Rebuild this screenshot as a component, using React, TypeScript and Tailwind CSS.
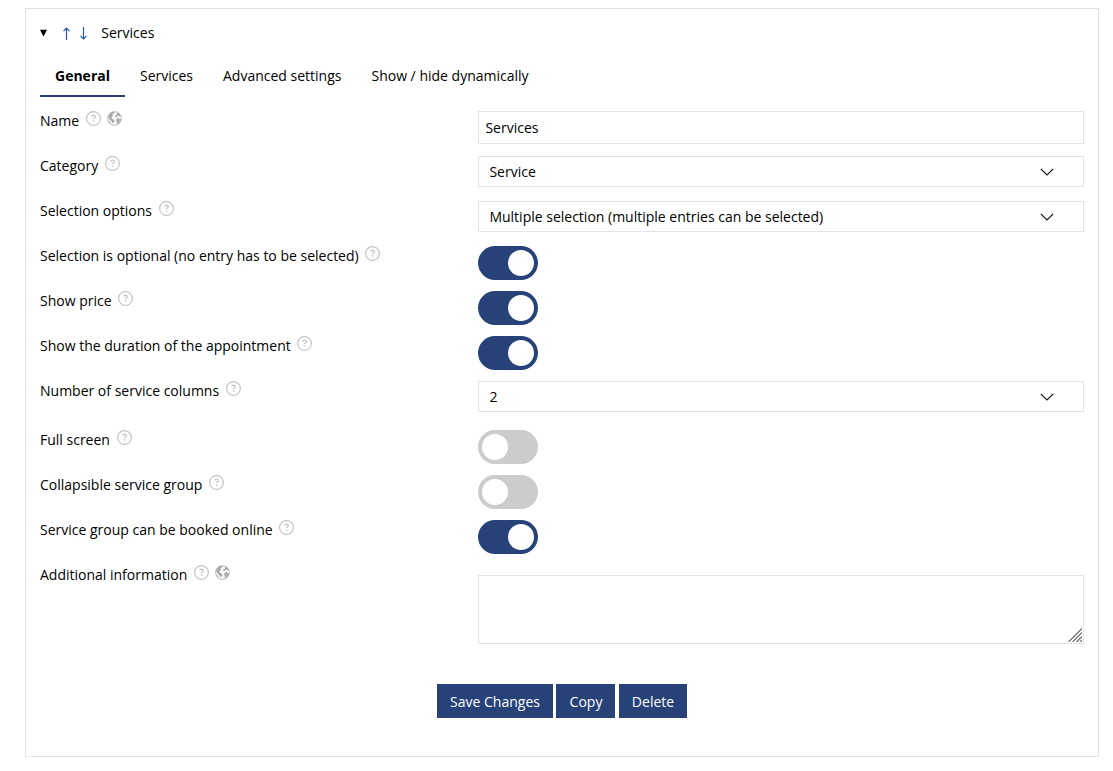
import { useState } from 'react';
import type { ReactNode } from 'react';

const tabs = ['General', 'Services', 'Advanced settings', 'Show / hide dynamically'];

function HelpIcon() {
  return (
    <svg className="ml-[6.7px] h-[15px] w-[15px] shrink-0" viewBox="0 0 15 15" fill="none" stroke="#c4c4c4">
      <circle cx="7.5" cy="7.5" r="6.9" strokeWidth="1.2" />
      <path d="M5.7 5.6C5.8 4.7 6.5 4.2 7.5 4.2c1.1 0 1.8.6 1.8 1.4 0 1.2-1.7 1.2-1.7 2.5" strokeWidth="1.3" />
      <path d="M7.6 9.2v1.4" strokeWidth="1.4" />
    </svg>
  );
}

function GlobeIcon() {
  return (
    <svg className="ml-[6.4px] h-[15px] w-[15px] shrink-0" viewBox="0 0 15 15">
      <circle cx="7.5" cy="7.5" r="6.9" fill="#f8f8f8" stroke="#bdbdbd" strokeWidth="1" />
      <path d="M1.6 4 4 1.4 7.6.6 7 2.2 5.2 3.4 6.4 4.8 4.8 5.6 4.4 7.2 6.4 8.6 7.6 9.8 6.8 11.4 5.6 12 4.6 10.2 3 9 1.4 6.6z" fill="#a8a8a8" />
      <path d="M10.4 1.4 12.6 2.8 13.8 5 12.4 5.2 11.6 4.4 10.2 5.6 8.6 6.2 7.8 5 9.6 4z" fill="#a8a8a8" />
      <path d="M9.6 7.4 11.4 6.8 12.6 8 14.2 8 13.4 10.8 11.4 12.8 9.4 13.6 10 11.6 9 9.8z" fill="#b0b0b0" />
      <path d="M1.2 9.6 2.6 10.2 3.8 12.8 2.2 11.6z" fill="#b0b0b0" />
    </svg>
  );
}

function Row({ label, globe, tall, children }: { label: string; globe?: boolean; tall?: boolean; children: ReactNode }) {
  return (
    <div className={`flex items-start ${tall ? 'h-[49px]' : 'h-[45px]'}`}>
      <div className="flex w-[438px] shrink-0 items-start">
        <span className="leading-[19px]">{label}</span>
        <HelpIcon />
        {globe && <GlobeIcon />}
      </div>
      {children}
    </div>
  );
}

function Select({ value }: { value: string }) {
  return (
    <button className="flex h-[31px] flex-1 items-center justify-between border border-[#e3e3e3] bg-white pr-[29px] pl-[10.4px] text-left">
      <span>{value}</span>
      <svg className="h-[8px] w-[14px]" viewBox="0 0 14 8" fill="none" stroke="#111" strokeWidth="1.05">
        <path d="M.9 1 7 6.9 13.1 1" />
      </svg>
    </button>
  );
}

function Toggle({ initial = false }: { initial?: boolean }) {
  const [on, setOn] = useState(initial);

  return (
    <button
      role="switch"
      aria-checked={on}
      onClick={() => setOn(!on)}
      className={`flex h-[34px] w-[60px] items-center rounded-full px-1 ${on ? 'justify-end bg-[#264278]' : 'justify-start bg-[#cccccc]'}`}
    >
      <span className="h-[26px] w-[26px] rounded-full bg-white" />
    </button>
  );
}

export default function App() {
  const [activeTab, setActiveTab] = useState('General');
  const [name, setName] = useState('Services');

  return (
    <div className="h-[771px] bg-white pt-2 pr-[14px] pl-[25px] font-['Open_Sans',sans-serif] text-sm text-black">
      <div className="h-[749px] border border-[#e1e1e1] px-[14px]">
        {/* Header */}
        <div className="flex h-[48px] items-center">
          <svg className="h-[8px] w-[7px]" viewBox="0 0 7 8">
            <path d="M0 .8h7L3.5 7.6z" fill="#000" />
          </svg>
          <svg className="ml-[15px] h-[13px] w-[9px]" viewBox="0 0 9 13" fill="none" stroke="#2456b0" strokeWidth="1.2">
            <path d="M4.5 13V1.2M1.5 4.2l3-3 3 3" />
          </svg>
          <svg className="ml-[8px] h-[13px] w-[9px]" viewBox="0 0 9 13" fill="none" stroke="#2456b0" strokeWidth="1.2">
            <path d="M4.5 0v11.8M1.5 8.8l3 3 3-3" />
          </svg>
          <span className="ml-[13.3px]">Services</span>
        </div>

        {/* Tabs */}
        <div className="flex h-[40px]">
          {tabs.map((tab) => (
            <button
              key={tab}
              onClick={() => setActiveTab(tab)}
              className={`border-b-2 px-[15px] ${activeTab === tab ? 'border-[#264278] font-bold' : 'border-transparent'}`}
            >
              {tab}
            </button>
          ))}
        </div>

        {/* Settings */}
        <div className="mt-[14px]">
          <Row label="Name" globe>
            <input
              value={name}
              onChange={(e) => setName(e.target.value)}
              className="h-[33px] flex-1 border border-[#e3e3e3] px-[6.4px] outline-none"
            />
          </Row>
          <Row label="Category">
            <Select value="Service" />
          </Row>
          <Row label="Selection options">
            <Select value="Multiple selection (multiple entries can be selected)" />
          </Row>
          <Row label="Selection is optional (no entry has to be selected)">
            <Toggle initial />
          </Row>
          <Row label="Show price">
            <Toggle initial />
          </Row>
          <Row label="Show the duration of the appointment">
            <Toggle initial />
          </Row>
          <Row label="Number of service columns" tall>
            <Select value="2" />
          </Row>
          <Row label="Full screen">
            <Toggle />
          </Row>
          <Row label="Collapsible service group">
            <Toggle />
          </Row>
          <Row label="Service group can be booked online">
            <Toggle initial />
          </Row>
          <Row label="Additional information" globe>
            <div className="mt-[10px] flex h-[69px] flex-1 items-end justify-end border border-[#e3e3e3] pr-px pb-px">
              <svg className="h-[14px] w-[14px]" viewBox="0 0 14 14" stroke="#777" strokeWidth="1.3">
                <path d="M.5 14 14 .5M4.5 14 14 4.5M8.5 14 14 8.5M12 14l2-2" />
              </svg>
            </div>
          </Row>
        </div>

        {/* Actions */}
        <div className="mt-[74px] flex justify-center gap-[3px] text-white">
          <button className="h-[34px] w-[116px] bg-[#264278] pt-[2px]">Save Changes</button>
          <button className="h-[34px] w-[59px] bg-[#264278] pt-[2px] pl-px">Copy</button>
          <button className="ml-px h-[34px] w-[68px] bg-[#264278] pt-[2px]">Delete</button>
        </div>
      </div>
    </div>
  );
}
